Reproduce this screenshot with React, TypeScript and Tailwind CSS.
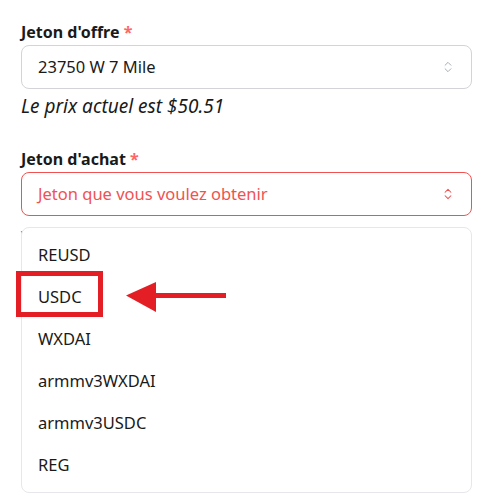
import { ChevronsUpDown } from "lucide-react"

const tokens = ["REUSD", "USDC", "WXDAI", "armmv3WXDAI", "armmv3USDC", "REG"]

export default function App() {
  return (
    <div
      className="relative min-h-[501px] w-[497px] bg-white px-[21px] pt-5 text-[#1a1a1a]"
      style={{ fontFamily: '"Noto Sans", "Open Sans", sans-serif' }}
    >
      <div className="w-[451px]">
        {/* offer token */}
        <label className="block text-base font-bold leading-6">
          Jeton d'offre <span className="text-red-400">*</span>
        </label>
        <div className="mt-px flex h-11 items-center justify-between rounded-lg border border-[#d4d4d8] px-4">
          <span className="text-[16.5px]">23750 W 7 Mile</span>
          <ChevronsUpDown className="h-[14px] w-[14px] text-gray-400" strokeWidth={1.5} />
        </div>
        <p className="mt-[3px] text-[19px] italic leading-7">Le prix actuel est $50.51</p>

        {/* buy token */}
        <label className="mt-[27px] block text-base font-bold leading-6">
          Jeton d'achat <span className="text-red-400">*</span>
        </label>
        <div className="relative mt-px">
          <div className="flex h-11 items-center justify-between rounded-lg border border-[#f05252] px-4">
            <span className="text-[16.5px] text-[#f05252]">Jeton que vous voulez obtenir</span>
            <ChevronsUpDown className="h-[14px] w-[14px] text-[#f05252]" strokeWidth={1.8} />
          </div>
          <p className="mt-2.5 text-sm text-[#f05252]">Veuillez sélectionner un jeton</p>

          {/* open listbox */}
          <ul className="absolute left-0 right-0 top-[55px] rounded-lg border border-[#e5e7eb] bg-white py-1.5">
            {tokens.map((t) => (
              <li key={t} className="flex h-[42px] items-center px-4 text-[16.5px]">
                {t}
              </li>
            ))}
          </ul>
        </div>
      </div>

      {/* annotation: box + arrow */}
      <div className="absolute left-4 top-[271px] h-[46px] w-[87px] border-[5px] border-[#e31e24]" />
      <svg className="absolute left-[124px] top-[280px]" width="104" height="34" viewBox="0 0 104 34">
        <rect x="30" y="13" width="72" height="5" fill="#e31e24" />
        <polygon points="2,15.5 32,2 32,32" fill="#e31e24" />
      </svg>
    </div>
  )
}
